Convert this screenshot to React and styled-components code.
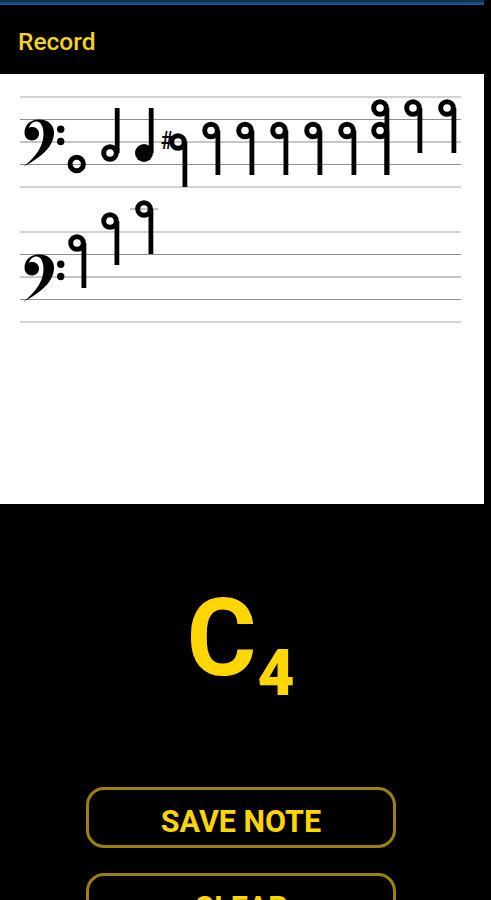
import React from 'react';
import styled, { createGlobalStyle } from 'styled-components';

const GOLD = '#FFD600';

const GlobalStyle = createGlobalStyle`
  html, body {
    margin: 0;
    height: 100%;
    background: #000;
    overflow: hidden;
  }
`;

const Screen = styled.div`
  width: 491px;
  height: 900px;
  overflow: hidden;
  background: #000;
  font-family: Roboto, "Liberation Sans", sans-serif;
  color: ${GOLD};
`;

const StatusStrip = styled.div`
  height: 5px;
  width: 484px;
  box-sizing: border-box;
  background: #1c4a7c;
  border-top: 2px solid #123252;
  border-bottom: 1px solid #1f5aa0;
`;

const Header = styled.header`
  height: 69px;
  display: flex;
  align-items: center;
  padding-left: 18px;
  padding-top: 4px;
  box-sizing: border-box;
  font-size: 24.500px;
  font-weight: 500;
  color: #f8d21c;
`;

const Sheet = styled.section`
  width: 484px;
  height: 430px;
  background: #fff;
`;

const Score = styled.svg`
  display: block;
`;

const Reading = styled.div`
  height: 283px;
  padding: 75px 10px 0 0;
  box-sizing: border-box;
  text-align: center;
  font-weight: 700;
  line-height: 120px;
  white-space: nowrap;
`;

const NoteName = styled.span`
  font-size: 107px;
  letter-spacing: 1px;
`;

const Octave = styled.span`
  font-size: 64px;
  font-weight: 900;
  vertical-align: -20px;
`;

const Actions = styled.div`
  display: flex;
  flex-direction: column;
  gap: 25px;
  padding-left: 86px;
`;

const ActionButton = styled.button`
  width: 310px;
  height: 61px;
  flex: none;
  box-sizing: border-box;
  background: transparent;
  border: 3px solid #9c8208;
  border-radius: 18px;
  color: ${GOLD};
  font-family: inherit;
  font-size: 30.500px;
  font-weight: 700;
  padding: 7px 0 0;
`;

const staffTops = [97, 232];
const LINE_GAP = 22.5;

// x of the head, y of the head, y where the stem ends
const notes = [
  { x: 178, y: 142, end: 187 },
  { x: 211, y: 130.500, end: 175 },
  { x: 245, y: 130.500, end: 175 },
  { x: 279, y: 130.500, end: 175 },
  { x: 313, y: 130.500, end: 175 },
  { x: 347, y: 130.500, end: 175 },
  { x: 380, y: 130.500, end: 175 },
  { x: 380, y: 108, end: 175 },
  { x: 413, y: 108, end: 153 },
  { x: 447, y: 108, end: 153 },
  { x: 77, y: 243, end: 288 },
  { x: 110, y: 221, end: 265 },
  { x: 144, y: 209, end: 254 },
];

function Clef({ y }) {
  return (
    <g transform={`translate(0 ${y})`}>
      <path
        d="M23 70 C42 60 54 49 54 35.500 C54 27 47 22.500 39 22.500 C30 22.500 24.500 28 24.500 36 C24.500 40.500 28 43.500 32 43.500 C36 43.500 39 40.500 39 36.500 C39 32.500 36 30 32 30 C30.500 30 29.500 30.500 29 31 C30 27 33 24.500 36.500 24.500 C41 24.500 43.500 30 43.500 37 C43.500 49 36 60 23 70 Z"
        fill="#000"
      />
      <circle cx="60.700" cy="32.300" r="3.700" fill="#000" />
      <circle cx="60.700" cy="44.500" r="3.700" fill="#000" />
    </g>
  );
}

function StemNote({ x, y, end }) {
  return (
    <g>
      <circle cx={x} cy={y} r="6.300" fill="none" stroke="#000" strokeWidth="5" />
      <rect x={x + 4.500} y={y} width="4.800" height={end - y} fill="#000" />
    </g>
  );
}

function ScoreDrawing() {
  return (
    <Score width="484" height="430" viewBox="0 74 484 430">
      {staffTops.map((top) =>
        [0, 1, 2, 3, 4].map((i) => (
          <rect
            key={`${top}-${i}`}
            x="20"
            y={top + i * LINE_GAP - 0.5}
            width="441"
            height="1"
            fill={i === 0 || i === 4 ? '#a8a8a8' : '#8e8e8e'}
          />
        ))
      )}
      {staffTops.map((top) => (
        <Clef key={top} y={top} />
      ))}

      <circle cx="76.700" cy="164" r="6.700" fill="none" stroke="#000" strokeWidth="5" />

      <circle cx="110" cy="153" r="6.300" fill="none" stroke="#000" strokeWidth="5" />
      <rect x="114.800" y="108" width="4.800" height="45" fill="#000" />

      <circle cx="144" cy="153" r="9" fill="#000" />
      <rect x="148.800" y="108" width="4.800" height="45" fill="#000" />

      <text
        transform="translate(160.500 149) scale(0.95 1.15)"
        fontFamily="Roboto, sans-serif"
        fontSize="22"
        fontWeight="500"
        fill="#000"
      >
        #
      </text>

      <rect x="130" y="208.500" width="28" height="1" fill="#8e8e8e" />
      {notes.map((n) => (
        <StemNote key={`${n.x}-${n.y}`} {...n} />
      ))}
    </Score>
  );
}

export default function App() {
  return (
    <Screen>
      <GlobalStyle />
      <StatusStrip />
      <Header>Record</Header>
      <Sheet>
        <ScoreDrawing />
      </Sheet>
      <Reading>
        <NoteName>C</NoteName>
        <Octave>4</Octave>
      </Reading>
      <Actions>
        <ActionButton>SAVE NOTE</ActionButton>
        <ActionButton>CLEAR</ActionButton>
      </Actions>
    </Screen>
  );
}
